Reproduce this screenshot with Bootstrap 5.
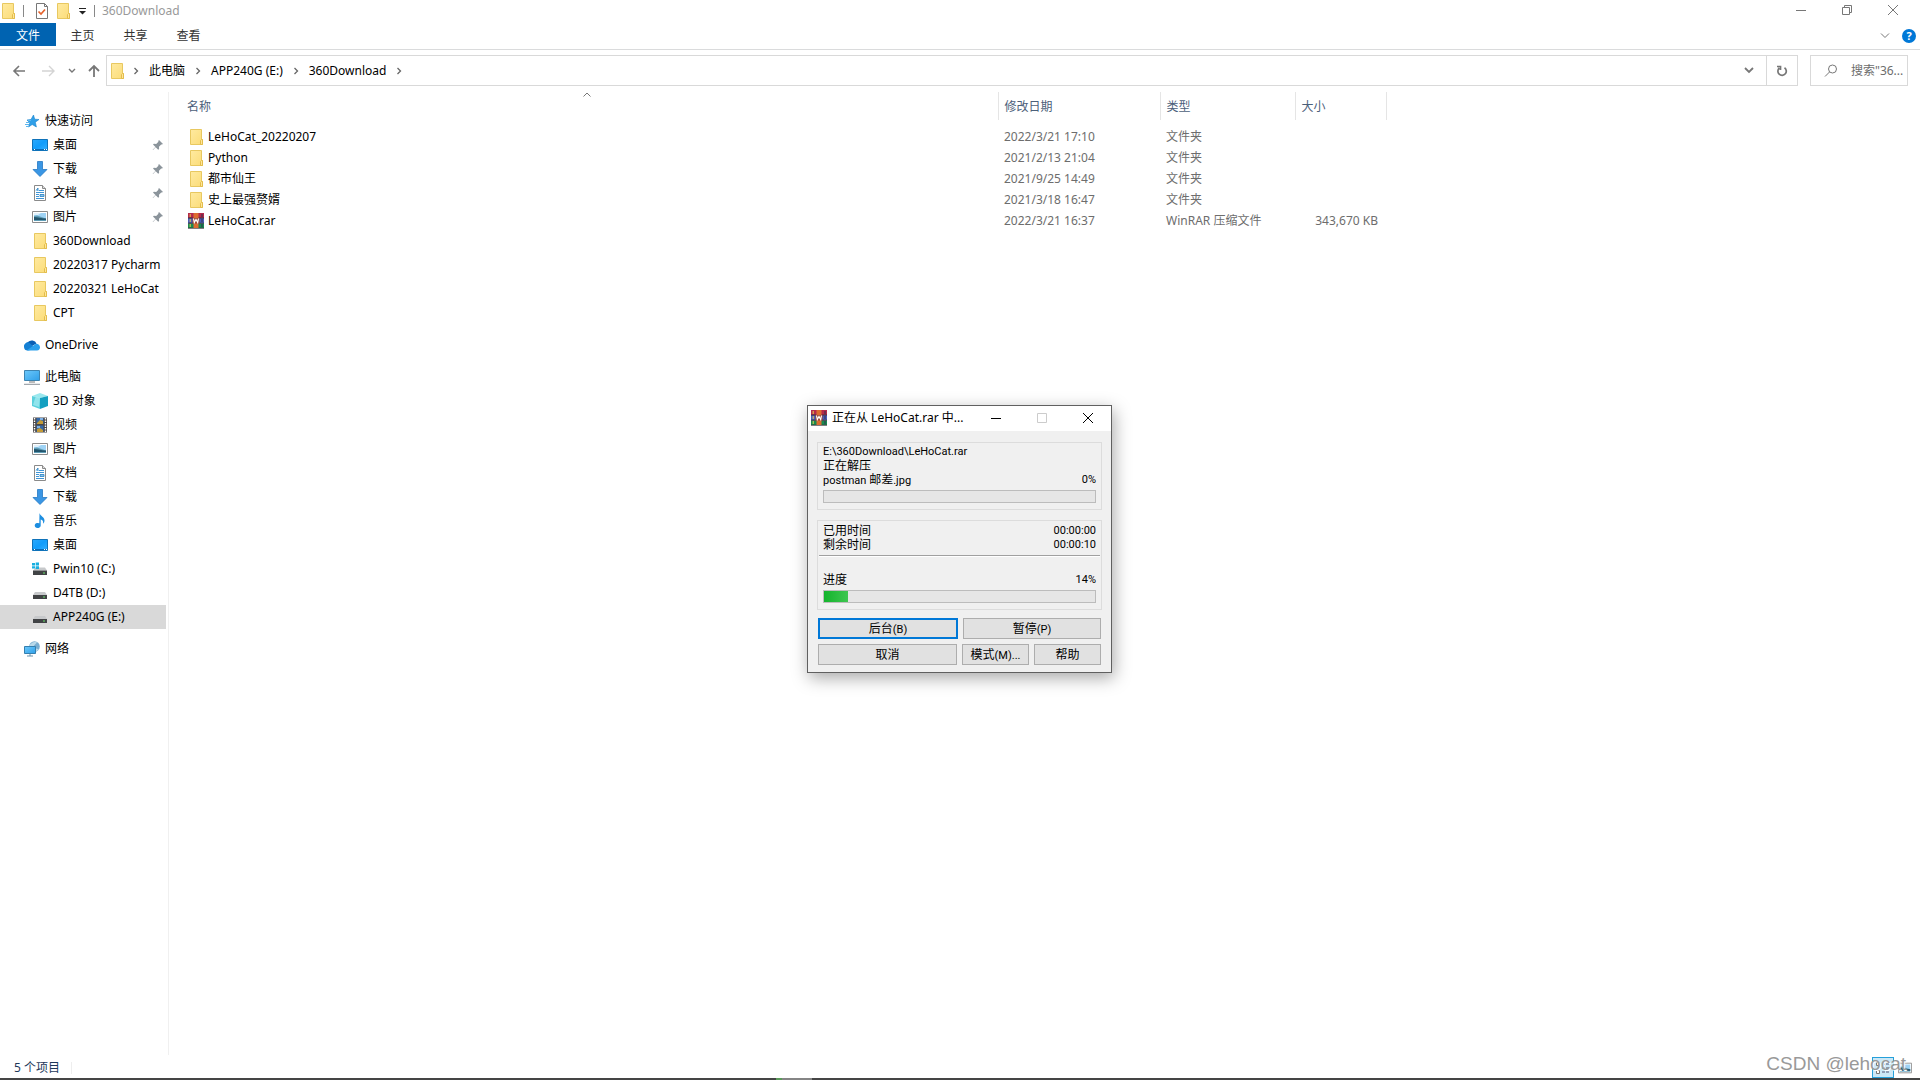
<!DOCTYPE html>
<html lang="zh-CN">
<head>
<meta charset="utf-8">
<meta name="viewport" content="width=device-width, initial-scale=1">
<title>360Download</title>
<link href="https://cdn.jsdelivr.net/npm/bootstrap@5.3.0/dist/css/bootstrap.min.css" rel="stylesheet">
<style>
  body { font: 12px/16px "Noto Sans", "Noto Sans CJK SC", sans-serif; color: #000; background: #fff; overflow: hidden; }
  a { color: inherit; text-decoration: none; }
  svg { display: block; flex: none; }
  button { font: inherit; color: inherit; background: none; border: 0; padding: 0; }
  .glyph { fill: none; stroke: #777; stroke-width: 1; }

  .title-strip { height: 23px; color: #999; }
  .quick-tools { gap: 7px; padding-top: 3px; }
  .title-rule { width: 1px; height: 12px; background: #888; }
  .win-btn { width: 46px; height: 20px; display: flex; align-items: center; justify-content: center; }
  .ribbon { height: 27px; border-bottom: 1px solid #dadbdc; color: #333; }
  .ribbon-tab { width: 53px; height: 23px; line-height: 25px; text-align: center; }
  .ribbon-file { width: 56px; background: #0063b1; color: #fff; }
  .help-dot { width: 14px; height: 14px; border-radius: 50%; background: #0078d7; color: #fff; font-weight: 700; font-size: 11px; line-height: 14px; }

  .address-row { padding: 5px 12px 6px 12px; }
  .address-box, .search-box { height: 31px; border: 1px solid #d9d9d9; }
  .address-box { padding-left: 2px; }
  .crumbs { gap: 10px; padding-left: 8px; }
  .search-box { width: 98px; padding: 0 3px 0 12px; margin-left: 12px; }
  .search-box input { border: 0; outline: 0; padding: 0; color: #666; width: 54px; background: none; }
  .search-box input::placeholder { color: #6d6d6d; opacity: 1; }
  .nav-btns { width: 94px; }
  .refresh-btn { width: 31px; border-left: 1px solid #d9d9d9; }

  .side-pane { width: 169px; border-right: 1px solid #f0f0f0; padding-top: 17px; }
  .side-item { height: 24px; display: flex; align-items: center; gap: 5px; padding-left: 24px; white-space: nowrap; width: 166px; }
  .side-item.sub { padding-left: 32px; }
  .side-item.picked { background: #d9d9d9; }
  .side-group { margin-bottom: 8px; }
  .pin { margin-left: auto; margin-right: 2px; }

  .file-table { table-layout: fixed; width: 1217px; border-collapse: collapse; color: #6d6d6d; }
  .file-table th { height: 28px; font-weight: 400; color: #4c607a; border-right: 1px solid #e5e5e5; padding: 1px 0 0 6px; }
  .file-table td { height: 21px; padding: 0 8px 0 6px; white-space: nowrap; }
  .file-table th:first-child, .file-table td:first-child { padding-left: 18px; }
  .file-table tbody::before { content: ""; display: block; height: 6px; }
  .file-name { color: #000; display: flex; align-items: center; gap: 4px; padding-left: 1px; }
  .sort-mark { position: absolute; top: 0; left: 50%; }

  .status-row { height: 23px; padding: 2px 0 0 14px; color: #1e395b; }
  .status-rule { width: 1px; height: 12px; background: #eee; margin-left: 11px; }
  .view-btn { width: 22px; height: 21px; display: flex; align-items: center; justify-content: center; }
  .view-on { background: #cce8f6; border: 1px solid #26a0da; }
  .task-edge { height: 2px; background: #454545; }
  .task-live { width: 36px; margin-left: 776px; background: #858585; border-left: 6px solid #5b9a5b; }
  .stamp { position: absolute; right: 14px; bottom: 4px; font: 19px/24px "Liberation Sans", sans-serif; color: #999; text-shadow: 1px 1px 0 #fff; }

  .dialog-layer { position: absolute; inset: 0 1px 3px 0; pointer-events: none; }
  .rar-dialog { pointer-events: auto; width: 305px; border: 1px solid #606060; background: #f0f0f0; box-shadow: 2px 5px 16px rgba(0,0,0,.34); line-height: 14px; color: #000; }
  .rar-title { height: 25px; background: #fff; padding-left: 3px; gap: 5px; }
  .rar-body { padding: 11px 9px 7px 9px; }
  .rar-box { border: 1px solid #dcdcdc; padding: 2px 5px 6px; }
  .rar-box.timing { margin: 10px 0 8px; padding-top: 3px; }
  .rar-line { display: flex; justify-content: space-between; height: 14px; }
  .latin { font-family: Roboto, "Noto Sans", sans-serif; font-size: 11px; }
  .rar-rule { height: 2px; background: #a0a0a0; border-bottom: 1px solid #fff; margin: 3px -4px 16px; }
  .rar-bar { height: 13px; border: 1px solid #bcbcbc; border-radius: 0; background: #e6e6e6; margin-top: 3px; }
  .rar-bar .progress-bar { background: linear-gradient(90deg, #13b42c, #3fc651); }
  .rar-buttons { padding: 0 1px; display: grid; gap: 5px; }
  .rar-pair { display: flex; gap: 5px; flex: 1 1 0; min-width: 0; }
  .rar-btn { height: 21px; border: 1px solid #adadad; background: #e1e1e1; line-height: 19px; flex: 1 1 0; min-width: 0; }
  .rar-btn.main { border: 2px solid #0078d7; line-height: 17px; }
</style>
<script src="https://cdn.jsdelivr.net/npm/bootstrap@5.3.0/dist/js/bootstrap.bundle.min.js"></script>
</head>
<body>
<svg width="0" height="0" class="position-absolute">
  <defs>
    <linearGradient id="gf" x1="0" x2="1" y2="1"><stop stop-color="#ffeaa0"/><stop offset="1" stop-color="#fbdc78"/></linearGradient>
    <linearGradient id="gb" x1="0" x2="1" y2="1"><stop stop-color="#6cc8fb"/><stop offset="1" stop-color="#2f9fe8"/></linearGradient>
    <linearGradient id="gd" x1="0" x2="1" y2="1"><stop stop-color="#2ba8fb"/><stop offset=".5" stop-color="#109cfb"/><stop offset="1" stop-color="#35b0ff"/></linearGradient>
    <symbol id="folder" viewBox="0 0 16 16"><path d="M2.500.5h11v10h1v5h-12z" fill="url(#gf)" stroke="#e8c860"/><path d="M12.500 15.500v-4l1-1h1v5z" fill="#ffe69a" stroke="#e3bd4c"/></symbol>
    <symbol id="star" viewBox="0 0 16 16"><path d="M9.500 2l1.200 4.200 4.300.3-3.700 2.700 1.100 4.800-4.200-2.500L4.500 14l1.300-4.300L3 7l4-.5z" fill="#2f9fe8" stroke="#1681cc" stroke-width=".6"/><path d="M2 9.500h4M1 11.500h4M2 13.500h3M4 7.500h3" stroke="#5db6ee"/></symbol>
    <symbol id="desk" viewBox="0 0 16 16"><path d="M.5 2.500h15v11H.5z" fill="url(#gd)" stroke="#0f72b9"/><path d="M1 12.500h14" stroke="#0b6bb5"/><path d="M2 12.500h1M12 12.500h1M14 12.500h1" stroke="#fff"/></symbol>
    <symbol id="down" viewBox="0 0 16 16"><path d="M5.500.5h5v8h4.500L8 15.500 1 8.500h4.500z" fill="#3a96e4" stroke="#2579c4" stroke-width=".8"/></symbol>
    <symbol id="doc" viewBox="0 0 16 16"><path d="M2.500.5h8l3 3v12h-11z" fill="#fff" stroke="#8a8a8a"/><path d="M10.500.5v3h3" fill="#ddd" stroke="#8a8a8a"/><path d="M7 5.500h5M4 7.500h8M4 9.500h3M4 11.500h3M4 13.500h8" stroke="#3f95d6"/><path d="M4 5.500l2-2.500v3M8 9.500h4v2H8z" stroke="#2680c2" fill="#8cc5ee" stroke-width=".8"/></symbol>
    <symbol id="pic" viewBox="0 0 16 16"><path d="M.5 2.500h15v11H.5z" fill="#fff" stroke="#8c8c8c"/><path d="M2 4h12v8H2z" fill="#9fd3f5"/><path d="M2 7l3-.5 9 3V12H2z" fill="#5f9db5"/><path d="M2 8c4 0 7 1.500 12 1.500V11H2z" fill="#23556d"/><path d="M2 4h7l-3 2H2z" fill="#e0f1fb"/></symbol>
    <symbol id="pin" viewBox="0 0 12 12"><path d="M7 1l4 4-1.200.6-.6-.1-2.200 2.200.1 2.200-.9.9-2.500-2.600L1 11l-.3-.3L3.500 8 1 5.600l.9-.9 2.300.2 2.200-2.200-.1-.6z" fill="#8b949b"/></symbol>
    <symbol id="cloud" viewBox="0 0 16 16"><path d="M4 5a5 4.500 0 0 1 8.500 1.500L8 9 3 6z" fill="#0a5fb5"/><path d="M0 10a4 4 0 0 1 5-4.500L12 12l-8 1.500A3.800 3.800 0 0 1 0 10z" fill="#1580d4"/><path d="M3 13.300L11.500 7A3.500 3.500 0 0 1 16 10.300 3.200 3.200 0 0 1 13 13.500H4z" fill="#2ba0ec"/></symbol>
    <symbol id="pc" viewBox="0 0 16 16"><path d="M.5 1.500h15v10H.5z" fill="url(#gb)" stroke="#3e84b0"/><path d="M5 13h6" stroke="#777"/><path d="M0 15.300h16" stroke="#8a9299"/></symbol>
    <symbol id="cube" viewBox="0 0 16 16"><path d="M0 3l8-3 8 3-8 2z" fill="#9ae8ee"/><path d="M0 3l8 2v11l-8-3z" fill="#5cd0dc"/><path d="M8 5l8-2v10l-8 3z" fill="#149fc0"/><path d="M4 2.500L8 5l-1 9-6-2z" fill="#a8ecf2" opacity=".7"/></symbol>
    <symbol id="film" viewBox="0 0 16 16"><path d="M1 .5h14v15H1z" fill="#4a4747"/><path d="M2.500 1v15M13.500 1v15" stroke="#fff" stroke-dasharray="1.500 1" stroke-width="1.400"/><path d="M4.500 1h7v6h-7zM4.500 8.500h7V15h-7z" fill="#3468a8"/><path d="M5 6l3-3 3 1v3H5zM5 12l3-1 3 2v2H5z" fill="#c49b36"/><path d="M8 1h3v2H8zM5 9h3v2H5z" fill="#7fb2e6"/></symbol>
    <symbol id="note" viewBox="0 0 16 16"><path d="M7.500 0c.5 3 5.500 4 5 8-.1 1-.6 2-1.500 2.700.6-2.700-.5-3.800-2.300-4.200v6.200A3 2.600 0 1 1 7.300 10.300z" fill="#1d8ee0"/></symbol>
    <symbol id="drive" viewBox="0 0 16 16"><path d="M3 7h10l2 3H1z" fill="#c7c9cb"/><path d="M1 10h14v4H1z" fill="#414345"/><path d="M11 12h2" stroke="#67e06b"/></symbol>
    <symbol id="windrive" viewBox="0 0 16 16"><path d="M4 6.500h9l2 3H1z" fill="#c7c9cb"/><path d="M1 9.500h14v4.500H1z" fill="#414345"/><path d="M11 12h2" stroke="#67e06b"/><path d="M0 2h3v2.500H0zM3.700 1.500H7v3H3.700zM0 5.200h3V7.500H0zM3.700 5.200H7V8H3.700z" fill="#18aee0"/></symbol>
    <symbol id="net" viewBox="0 0 16 16"><circle cx="10.500" cy="5.500" r="5.300" fill="#79add0"/><path d="M6 3.500q4-4 7-2l-3 3 2 3 3 1-3 2-6-3z" fill="#b9d9ea"/><path d="M.5 5.500h11v7H.5z" fill="url(#gb)" stroke="#347faf"/><path d="M3 15h6M6 13v2" stroke="#6c93ab"/></symbol>
    <symbol id="rar" viewBox="0 0 16 16"><path d="M0 0h16v5H0z" fill="#b52a4b"/><path d="M0 5h16v5.500H0z" fill="#4a5cb8"/><path d="M0 10.500h16V15H0z" fill="#1a8a50"/><path d="M0 5h16M0 10.200h16M0 15.200h16" stroke="#372d33" stroke-width=".9"/><path d="M5.500 0h5v15h-5z" fill="#dd6c30"/><path d="M2.200 1v3M2.200 6v3M2.200 11v3" stroke="#e4d14d"/><path d="M14 1v3M14 6v3M14 11v3" stroke="#30304d"/><path d="M4.500 5h7v5.500h-7z" fill="#9c4530"/><path d="M5.500 5.500l.8 4 1.700-3 1.700 3 .8-4" fill="none" stroke="#fff" stroke-width="1.200"/></symbol>
    <symbol id="chev" viewBox="0 0 6 8"><path d="M1.500 1L4.500 4l-3 3" fill="none" stroke="#666" stroke-width="1.300"/></symbol>
  </defs>
</svg>

<div class="vh-100 d-flex flex-column position-relative">
  <header>
    <div class="title-strip d-flex align-items-start">
      <div class="quick-tools d-flex align-items-center">
        <svg width="16" height="16"><use href="#folder"/></svg>
        <span class="title-rule"></span>
        <button aria-label="属性" class="ms-1"><svg width="14" height="16" viewBox="1 0 14 16"><path d="M2.500.5h8l3 3v12h-11z" fill="#fff" stroke="#777"/><path d="M10.500.5v3h3" fill="none" stroke="#777"/><path d="M4.500 8.500L7 11l4-4.500" fill="none" stroke="#e5622c" stroke-width="1.700"/></svg></button>
        <button aria-label="新建文件夹"><svg width="15" height="16" viewBox="1 0 15 16"><use href="#folder" width="16" height="16"/></svg></button>
        <button aria-label="自定义"><svg width="9" height="8" viewBox="0 0 9 8"><path d="M1 1.500h7" stroke="#222"/><path d="M1 4h7L4.500 7.500z" fill="#222"/></svg></button>
        <span class="title-rule"></span>
        <span class="lh-1">360Download</span>
      </div>
      <div class="d-flex ms-auto pe-1">
        <button class="win-btn" aria-label="最小化"><svg width="10" height="10" class="glyph"><path d="M0 5.500h10"/></svg></button>
        <button class="win-btn" aria-label="还原"><svg width="10" height="10" class="glyph"><path d="M.5 2.500h7v7h-7zM2.500 2.500v-2h7v7h-2"/></svg></button>
        <button class="win-btn" aria-label="关闭"><svg width="10" height="10" class="glyph"><path d="M0 0l10 10M10 0L0 10"/></svg></button>
      </div>
    </div>
    <nav class="ribbon d-flex">
      <a href="#" class="ribbon-tab ribbon-file">文件</a>
      <a href="#" class="ribbon-tab">主页</a>
      <a href="#" class="ribbon-tab">共享</a>
      <a href="#" class="ribbon-tab">查看</a>
      <div class="ms-auto d-flex align-items-center gap-2 pe-1">
        <button aria-label="展开功能区" class="me-1"><svg width="10" height="6" class="glyph"><path d="M1 .5l4 4 4-4"/></svg></button>
        <button class="help-dot" aria-label="帮助">?</button>
      </div>
    </nav>
    <div class="address-row d-flex align-items-center">
      <div class="nav-btns d-flex align-items-center">
        <button aria-label="后退"><svg width="14" height="12" class="glyph" style="stroke-width:1.600"><path d="M13 6H2M7 1L2 6l5 5"/></svg></button>
        <button aria-label="前进" class="ms-3"><svg width="14" height="12" class="glyph" style="stroke:#d4d4d4;stroke-width:1.400"><path d="M0 6h12M7 1l5 5-5 5"/></svg></button>
        <button aria-label="最近" class="ms-2 ps-1"><svg width="8" height="6" class="glyph" style="stroke-width:1.400"><path d="M1 1l3 3 3-3"/></svg></button>
        <button aria-label="上移" class="ms-2 ps-1"><svg width="12" height="13" class="glyph" style="stroke-width:1.800"><path d="M6 13V2M1 7l5-5 5 5"/></svg></button>
      </div>
      <div class="address-box d-flex align-items-center flex-grow-1">
        <svg width="16" height="16"><use href="#folder"/></svg>
        <div class="crumbs d-flex align-items-center">
          <svg width="6" height="8"><use href="#chev"/></svg>
          <a href="#">此电脑</a>
          <svg width="6" height="8"><use href="#chev"/></svg>
          <a href="#">APP240G (E:)</a>
          <svg width="6" height="8"><use href="#chev"/></svg>
          <a href="#">360Download</a>
          <svg width="6" height="8"><use href="#chev"/></svg>
        </div>
        <button class="ms-auto me-2 pe-1" aria-label="历史记录"><svg width="10" height="7" class="glyph" style="stroke-width:1.800"><path d="M1 1l4 4 4-4"/></svg></button>
        <button class="refresh-btn h-100 d-flex align-items-center justify-content-center" aria-label="刷新"><svg width="12" height="12" class="glyph" style="stroke-width:1.700"><path d="M8.500 2.700A4.200 4.200 0 1 1 3.300 3M1 1.500h3.500V5"/></svg></button>
      </div>
      <div class="search-box d-flex align-items-center gap-2">
        <svg width="16" height="14" class="glyph"><circle cx="9.500" cy="5" r="4"/><path d="M6.500 8L2 12.500"/></svg>
        <input type="text" class="ms-1" aria-label="搜索" placeholder='搜索"36...'>
      </div>
    </div>
  </header>

  <main class="d-flex flex-grow-1">
    <nav class="side-pane">
      <div class="side-group">
        <a href="#" class="side-item"><svg width="16" height="16"><use href="#star"/></svg>快速访问</a>
        <a href="#" class="side-item sub"><svg width="16" height="16"><use href="#desk"/></svg>桌面<svg class="pin" width="12" height="12"><use href="#pin"/></svg></a>
        <a href="#" class="side-item sub"><svg width="16" height="16"><use href="#down"/></svg>下载<svg class="pin" width="12" height="12"><use href="#pin"/></svg></a>
        <a href="#" class="side-item sub"><svg width="16" height="16"><use href="#doc"/></svg>文档<svg class="pin" width="12" height="12"><use href="#pin"/></svg></a>
        <a href="#" class="side-item sub"><svg width="16" height="16"><use href="#pic"/></svg>图片<svg class="pin" width="12" height="12"><use href="#pin"/></svg></a>
        <a href="#" class="side-item sub"><svg width="16" height="16"><use href="#folder"/></svg>360Download</a>
        <a href="#" class="side-item sub"><svg width="16" height="16"><use href="#folder"/></svg>20220317 Pycharm</a>
        <a href="#" class="side-item sub"><svg width="16" height="16"><use href="#folder"/></svg>20220321 LeHoCat</a>
        <a href="#" class="side-item sub"><svg width="16" height="16"><use href="#folder"/></svg>CPT</a>
      </div>
      <div class="side-group">
        <a href="#" class="side-item"><svg width="16" height="16"><use href="#cloud"/></svg>OneDrive</a>
      </div>
      <div class="side-group">
        <a href="#" class="side-item"><svg width="16" height="16"><use href="#pc"/></svg>此电脑</a>
        <a href="#" class="side-item sub"><svg width="16" height="16"><use href="#cube"/></svg>3D 对象</a>
        <a href="#" class="side-item sub"><svg width="16" height="16"><use href="#film"/></svg>视频</a>
        <a href="#" class="side-item sub"><svg width="16" height="16"><use href="#pic"/></svg>图片</a>
        <a href="#" class="side-item sub"><svg width="16" height="16"><use href="#doc"/></svg>文档</a>
        <a href="#" class="side-item sub"><svg width="16" height="16"><use href="#down"/></svg>下载</a>
        <a href="#" class="side-item sub"><svg width="16" height="16"><use href="#note"/></svg>音乐</a>
        <a href="#" class="side-item sub"><svg width="16" height="16"><use href="#desk"/></svg>桌面</a>
        <a href="#" class="side-item sub"><svg width="16" height="16"><use href="#windrive"/></svg>Pwin10 (C:)</a>
        <a href="#" class="side-item sub"><svg width="16" height="16"><use href="#drive"/></svg>D4TB (D:)</a>
        <a href="#" class="side-item sub picked"><svg width="16" height="16"><use href="#drive"/></svg>APP240G (E:)</a>
      </div>
      <a href="#" class="side-item"><svg width="16" height="16"><use href="#net"/></svg>网络</a>
    </nav>

    <section class="flex-grow-1">
      <table class="file-table">
        <colgroup><col style="width:829px"><col style="width:162px"><col style="width:135px"><col style="width:91px"></colgroup>
        <thead>
          <tr><th class="position-relative">名称<svg width="8" height="6" class="glyph sort-mark"><path d="M.5 4.500l3.500-3.500 3.500 3.500"/></svg></th><th>修改日期</th><th>类型</th><th>大小</th></tr>
        </thead>
        <tbody>
          <tr><td><a href="#" class="file-name"><svg width="16" height="16"><use href="#folder"/></svg>LeHoCat_20220207</a></td><td>2022/3/21 17:10</td><td>文件夹</td><td></td></tr>
          <tr><td><a href="#" class="file-name"><svg width="16" height="16"><use href="#folder"/></svg>Python</a></td><td>2021/2/13 21:04</td><td>文件夹</td><td></td></tr>
          <tr><td><a href="#" class="file-name"><svg width="16" height="16"><use href="#folder"/></svg>都市仙王</a></td><td>2021/9/25 14:49</td><td>文件夹</td><td></td></tr>
          <tr><td><a href="#" class="file-name"><svg width="16" height="16"><use href="#folder"/></svg>史上最强赘婿</a></td><td>2021/3/18 16:47</td><td>文件夹</td><td></td></tr>
          <tr><td><a href="#" class="file-name"><svg width="16" height="16"><use href="#rar"/></svg>LeHoCat.rar</a></td><td>2022/3/21 16:37</td><td>WinRAR 压缩文件</td><td class="text-end">343,670 KB</td></tr>
        </tbody>
      </table>
    </section>
  </main>

  <footer>
    <div class="status-row d-flex align-items-center">
      <span>5 个项目</span><span class="status-rule"></span>
      <div class="ms-auto d-flex pe-1">
        <button class="view-btn view-on" aria-label="详细信息"><svg width="14" height="12" viewBox="0 0 14 12"><path d="M.5.5h3v3h-3zM.5 8.500h3v3h-3z" fill="#fff" stroke="#777"/><path d="M6 2h3M10 2h3M6 6h3M10 6h3M6 10h3M10 10h3" stroke="#557"/></svg></button>
        <button class="view-btn" aria-label="大图标"><svg width="14" height="14"><use href="#pic"/></svg></button>
      </div>
    </div>
    <div class="task-edge d-flex"><div class="task-live"></div></div>
  </footer>

  <div class="stamp">CSDN @lehocat</div>

  <div class="dialog-layer d-flex align-items-center justify-content-center">
    <div class="rar-dialog" role="dialog" aria-labelledby="rarTitle">
      <div class="rar-title d-flex align-items-center">
        <svg width="16" height="16"><use href="#rar"/></svg>
        <span id="rarTitle">正在从 LeHoCat.rar 中...</span>
        <div class="d-flex ms-auto">
          <button class="win-btn" aria-label="最小化"><svg width="10" height="10" class="glyph" style="stroke:#000"><path d="M0 5.500h10"/></svg></button>
          <button class="win-btn" aria-label="最大化" disabled><svg width="10" height="10" class="glyph" style="stroke:#ccc"><path d="M.5.5h9v9h-9z"/></svg></button>
          <button class="win-btn" aria-label="关闭"><svg width="10" height="10" class="glyph" style="stroke:#000"><path d="M0 0l10 10M10 0L0 10"/></svg></button>
        </div>
      </div>
      <div class="rar-body">
        <div class="rar-box">
          <div class="rar-line"><span class="latin">E:\360Download\LeHoCat.rar</span></div>
          <div class="rar-line">正在解压</div>
          <div class="rar-line"><span><span class="latin">postman </span>邮差<span class="latin">.jpg</span></span><span class="latin">0%</span></div>
          <div class="progress rar-bar" role="progressbar" aria-label="当前文件" aria-valuenow="0" aria-valuemin="0" aria-valuemax="100"><div class="progress-bar" style="width:0%"></div></div>
        </div>
        <div class="rar-box timing">
          <div class="rar-line"><span>已用时间</span><span class="latin">00:00:00</span></div>
          <div class="rar-line"><span>剩余时间</span><span class="latin">00:00:10</span></div>
          <div class="rar-rule"></div>
          <div class="rar-line"><span>进度</span><span class="latin">14%</span></div>
          <div class="progress rar-bar" role="progressbar" aria-label="总进度" aria-valuenow="14" aria-valuemin="0" aria-valuemax="100"><div class="progress-bar" style="width:9%"></div></div>
        </div>
        <div class="rar-buttons">
          <div class="rar-pair"><button class="rar-btn main">后台<span class="latin">(B)</span></button><button class="rar-btn">暂停<span class="latin">(P)</span></button></div>
          <div class="rar-pair">
            <div class="rar-pair"><button class="rar-btn">取消</button></div>
            <div class="rar-pair"><button class="rar-btn">模式<span class="latin">(M)...</span></button><button class="rar-btn">帮助</button></div>
          </div>
        </div>
      </div>
    </div>
  </div>
</div>
</body>
</html>
